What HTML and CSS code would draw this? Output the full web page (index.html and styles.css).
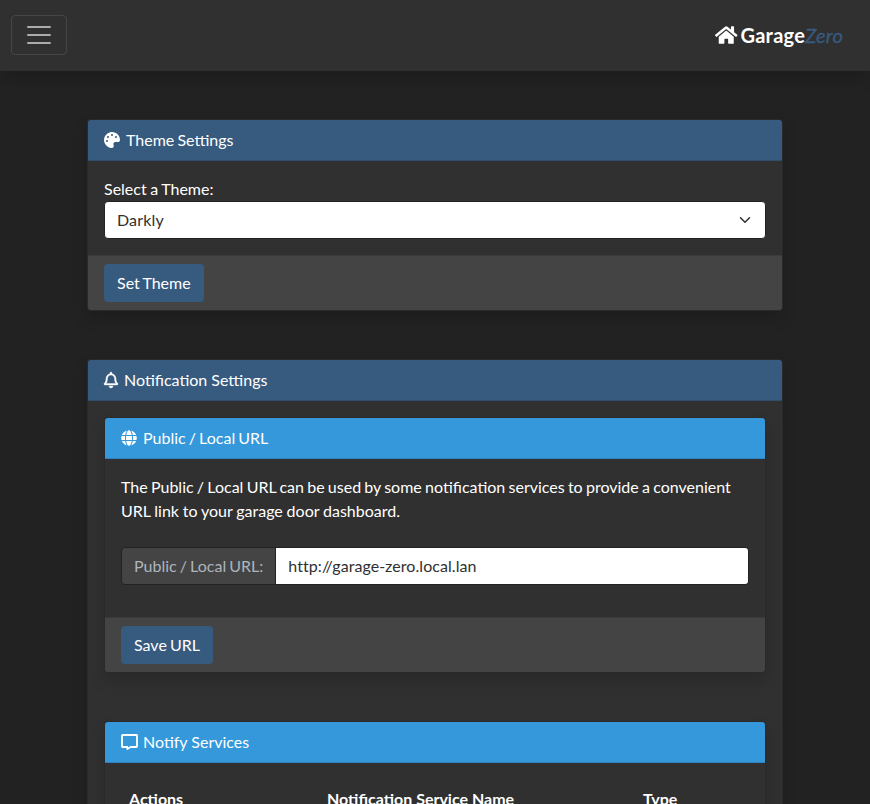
FILE: index.html
```html
<!DOCTYPE html>
<html lang="en">
<head>
<meta charset="utf-8">
<title>GarageZero</title>
<link rel="stylesheet" href="styles.css">
</head>
<body>
<nav class="navbar">
  <button class="toggler" aria-label="Menu"><svg width="30" height="30" viewBox="0 0 30 30"><path stroke="rgba(255,255,255,.6)" stroke-linecap="round" stroke-miterlimit="10" stroke-width="2" d="M4 7h22M4 15h22M4 23h22"/></svg></button>
  <a class="brand"><svg class="icon" width="22.5" height="20" viewBox="0 0 576 512"><path d="M280.370 148.260L96 300.110V464a16 16 0 0 0 16 16l112.060-.29a16 16 0 0 0 15.920-16V368a16 16 0 0 1 16-16h64a16 16 0 0 1 16 16v95.640a16 16 0 0 0 16 16.050L464 480a16 16 0 0 0 16-16V300L295.670 148.260a12.190 12.190 0 0 0-15.300 0zM571.600 251.470L488 182.560V44.050a12 12 0 0 0-12-12h-56a12 12 0 0 0-12 12v72.610L318.470 43a48 48 0 0 0-61 0L4.340 251.470a12 12 0 0 0-1.600 16.900l25.500 31A12 12 0 0 0 45.150 301l235.220-193.740a12.190 12.190 0 0 1 15.300 0L530.900 301a12 12 0 0 0 16.900-1.600l25.500-31a12 12 0 0 0-1.700-16.930z"/></svg><b>Garage</b><i>Zero</i></a>
</nav>
<main class="container">
  <section class="card theme">
    <header class="head"><svg class="icon" width="16" height="16" viewBox="0 0 512 512"><path d="M204.300 5C104.900 24.400 24.800 104.300 5.200 203.400c-37 187 131.700 326.400 258.800 306.700 41.200-6.400 61.400-54.600 42.500-91.700-23.100-45.400 9.900-98.400 60.900-98.400h79.700c35.800 0 64.800-29.600 64.900-65.300C511.500 97.100 368.100-26.900 204.300 5zM96 320a32 32 0 1 1 0-64 32 32 0 0 1 0 64zm32-128a32 32 0 1 1 0-64 32 32 0 0 1 0 64zm128-64a32 32 0 1 1 0-64 32 32 0 0 1 0 64zm128 64a32 32 0 1 1 0-64 32 32 0 0 1 0 64z"/></svg>Theme Settings</header>
    <div class="body"><label for="theme">Select a Theme:</label><div class="select" id="theme"><span class="value">Darkly</span><svg width="16" height="12" viewBox="0 0 16 16"><path fill="none" stroke="#303030" stroke-linecap="round" stroke-linejoin="round" stroke-width="2" d="M2 5l6 6 6-6"/></svg></div></div>
    <footer class="foot"><button class="btn">Set Theme</button></footer>
  </section>
  <section class="card">
    <header class="head wide"><svg class="icon bell" width="14" height="16" viewBox="0 0 448 512"><path d="M439.390 362.290c-19.320-20.760-55.470-51.990-55.470-154.290 0-77.700-54.480-139.900-127.940-155.160V32c0-17.670-14.320-32-31.980-32s-31.980 14.330-31.980 32v20.840C118.560 68.100 64.080 130.300 64.080 208c0 102.300-36.150 133.530-55.470 154.290-6 6.450-8.660 14.160-8.610 21.710.11 16.400 12.980 32 32.100 32h383.800c19.120 0 32-15.600 32.100-32 .05-7.550-2.610-15.270-8.610-21.710zM67.530 368c21.220-27.970 44.420-74.330 44.530-159.420 0-.2-.06-.38-.06-.58 0-61.860 50.140-112 112-112s112 50.140 112 112c0 .2-.06.38-.06.58.11 85.100 23.310 131.460 44.530 159.420H67.530zM224 512c35.320 0 63.970-28.650 63.970-64H160.030c0 35.350 28.650 64 63.970 64z"/></svg>Notification Settings</header>
    <div class="body">
      <section class="card">
        <header class="head info"><svg class="icon" width="16" height="16" viewBox="0 0 496 512"><path d="M336.500 160C322 70.700 287.800 8 248 8s-74 62.700-88.500 152h177zM152 256c0 22.200 1.200 43.500 3.300 64h185.300c2.100-20.500 3.300-41.800 3.300-64s-1.200-43.500-3.300-64H155.300c-2.100 20.500-3.300 41.800-3.300 64zm324.700-96c-28.600-67.900-86.500-120.400-158-141.600 24.400 33.800 41.200 84.700 50 141.600h108zM177.200 18.400C105.800 39.600 47.800 92.100 19.300 160h108c8.700-56.900 25.500-107.800 49.900-141.600zM487.400 192H372.700c2.100 21 3.300 42.500 3.300 64s-1.200 43-3.300 64h114.600c5.500-20.500 8.600-41.800 8.600-64s-3.100-43.500-8.500-64zM120 256c0-21.500 1.200-43 3.300-64H8.600C3.200 212.500 0 233.800 0 256s3.200 43.500 8.600 64h114.600c-2-21-3.200-42.500-3.200-64zm39.500 96c14.500 89.300 48.700 152 88.500 152s74-62.700 88.500-152h-177zm159.300 141.600c71.400-21.200 129.400-73.700 158-141.600h-108c-8.800 56.900-25.600 107.800-50 141.600zM19.300 352c28.600 67.900 86.500 120.400 158 141.600-24.400-33.800-41.200-84.700-50-141.600h-108z"/></svg>Public / Local URL</header>
        <div class="body"><p>The Public / Local URL can be used by some notification services to provide a convenient <span class="wrapped">URL link to your garage door dashboard.</span></p>
          <div class="group"><span>Public / Local URL:</span><div class="input">http://garage-zero.local.lan</div></div></div>
        <footer class="foot"><button class="btn">Save URL</button></footer>
      </section>
      <section class="card">
        <header class="head info wide"><svg class="icon message" width="17" height="16" viewBox="0 0 17 16"><path fill="none" stroke="currentColor" stroke-width="1.800" stroke-linejoin="round" d="M1.500 1h14q.5 0 .5.500v11q0 .5-.5.500H9.700L6.300 15.100V13H1.500q-.5 0-.5-.5v-11q0-.5.500-.5z"/></svg>Notify Services</header>
        <div class="body"><table><thead><tr><th>Actions</th><th>Notification Service Name</th><th>Type</th></tr></thead></table></div>
      </section>
    </div>
  </section>
</main>
</body>
</html>
```
FILE: styles.css
```css
* { box-sizing: border-box; }
html { overflow: hidden; }
body { margin: 0; height: 804px; overflow: hidden; background: #222; color: #fff; font: 400 16px/24px Lato, sans-serif; word-spacing: -1px; }
.navbar { height: 71px; padding: 0 27px 2px 11px; background: #303030; display: flex; align-items: center; justify-content: space-between; box-shadow: 0 8px 16px rgba(0,0,0,.15); }
.toggler { width: 56px; height: 40px; padding: 0; border: 1px solid rgba(255,255,255,.1); border-radius: 4px; background: none; display: flex; align-items: center; justify-content: center; }
.icon { fill: currentColor; vertical-align: -2px; overflow: visible; margin-right: 6px; }
.bell { stroke: currentColor; stroke-width: 12; }
.message { margin-right: 5px; }
.brand { font-size: 20px; line-height: 30px; }
.brand .icon { margin-right: 2.500px; }
.brand b { letter-spacing: .25px; }
.brand i { color: #375a7f; -webkit-text-stroke: .3px #375a7f; letter-spacing: .2px; }
.container { width: 696px; margin: 48px auto 0; }
.card { background: #303030; border: 1px solid rgba(0,0,0,.125); border-radius: 4px; box-shadow: 0 8px 16px rgba(0,0,0,.15); margin-bottom: 48px; }
.head { height: 41px; padding: 8px 16px; background: #375a7f; border-bottom: 1px solid rgba(0,0,0,.125); border-radius: 3px 3px 0 0; }
.info { background: #3498db; }
.wide { word-spacing: 0; }
.body { padding: 16px; }
.foot { padding: 8px 16px; background: #444; border-top: 1px solid rgba(0,0,0,.125); border-radius: 0 0 3px 3px; }
label { display: block; word-spacing: -.6px; }
.select { height: 38px; padding: 6px 12px; display: flex; justify-content: space-between; align-items: center; background: #fff; color: #303030; border: 1px solid #222; border-radius: 4px; }
.value { letter-spacing: .15px; }
.btn { display: block; height: 38px; padding: 0 13px; border: 0; border-radius: 4px; background: #375a7f; color: #fff; font: inherit; word-spacing: inherit; }
p { margin: 0 0 24px; word-spacing: -.85px; }
.wrapped { word-spacing: -.3px; }
.group { display: flex; height: 38px; margin-bottom: 16px; border: 1px solid #222; border-radius: 4px; overflow: hidden; background: #444; }
.group span { padding: 6px 12px; color: #adb5bd; border-right: 1px solid #222; }
.input { flex: 1; padding: 6px 12px; background: #fff; color: #303030; letter-spacing: .07px; }
table { width: 100%; border-collapse: collapse; text-align: left; word-spacing: 0; }
th { padding: 8px; }
th:first-child { width: 198px; }
th:nth-child(2) { width: 316px; }
```
